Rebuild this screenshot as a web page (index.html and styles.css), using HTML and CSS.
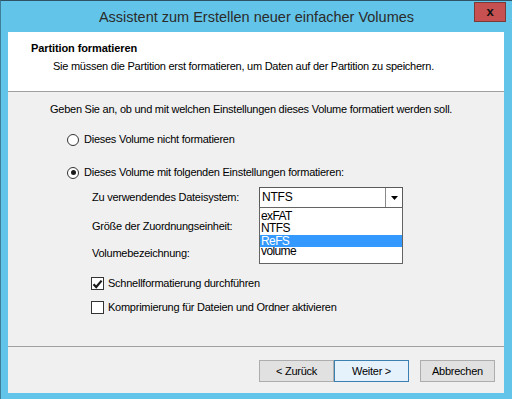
FILE: index.html
```html
<!DOCTYPE html>
<html lang="de">
<head>
<meta charset="utf-8">
<link rel="stylesheet" href="styles.css">
</head>
<body>
<div class="window">
  <div class="titlebar">
    <div class="title">Assistent zum Erstellen neuer einfacher Volumes</div>
    <div class="close">x</div>
  </div>
  <div class="client">
    <div class="header">
      <div class="h-title">Partition formatieren</div>
      <div class="h-sub">Sie müssen die Partition erst formatieren, um Daten auf der Partition zu speichern.</div>
    </div>
    <div class="body">
      <div class="intro">Geben Sie an, ob und mit welchen Einstellungen dieses Volume formatiert werden soll.</div>
      <div class="radio-row r1"><span class="radio"></span>Dieses Volume nicht formatieren</div>
      <div class="radio-row r2"><span class="radio on"></span>Dieses Volume mit folgenden Einstellungen formatieren:</div>
      <div class="settings">
        <div class="field f1">
          <span class="label">Zu verwendendes Dateisystem:</span>
          <div class="combo">
            <span class="combo-text">NTFS</span>
            <span class="combo-btn"><svg width="7" height="4" viewBox="0 0 7 4"><path d="M0 0H7L3.5 4Z" fill="#000"/></svg></span>
            <div class="dropdown">
              <div class="opt">exFAT</div>
              <div class="opt">NTFS</div>
              <div class="opt sel">ReFS</div>
              <div class="opt last">volume</div>
            </div>
          </div>
        </div>
        <div class="field f2"><span class="label">Größe der Zuordnungseinheit:</span></div>
        <div class="field f3"><span class="label">Volumebezeichnung:</span></div>
        <div class="check-row c1"><span class="check"><svg width="11" height="10" viewBox="0 0 11 10"><path d="M1.5 5.2L4.2 8L9.6 1.6" stroke="#1a1a1a" stroke-width="2.2" fill="none"/></svg></span>Schnellformatierung durchführen</div>
        <div class="check-row c2"><span class="check"></span>Komprimierung für Dateien und Ordner aktivieren</div>
      </div>
    </div>
    <div class="footer">
      <div class="btn-group">
        <div class="btn">&lt; Zurück</div>
        <div class="btn default">Weiter &gt;</div>
      </div>
      <div class="btn">Abbrechen</div>
    </div>
  </div>
</div>
</body>
</html>
```
FILE: styles.css
```css
html, body {
  margin: 0;
  padding: 0;
}
body {
  width: 512px;
  height: 399px;
  overflow: hidden;
  font-family: "Liberation Sans", Arial, sans-serif;
  font-size: 11px;
  letter-spacing: -0.25px;
  line-height: 13px;
  color: #000;
}
.window {
  box-sizing: border-box;
  width: 512px;
  height: 399px;
  background: #62c4e8;
  border-left: 1px solid #3f7f99;
  border-top: 1px solid #2f5364;
  display: flex;
  flex-direction: column;
}
.titlebar {
  height: 31px;
  position: relative;
  display: flex;
  align-items: center;
  justify-content: center;
}
.title {
  font-size: 14.5px;
  letter-spacing: 0;
  line-height: 18px;
  color: #2b2b2b;
  margin-top: 1px;
}
.close {
  position: absolute;
  right: 6px;
  top: 1px;
  width: 32px;
  height: 20px;
  box-sizing: border-box;
  background: #c75050;
  border: 1px solid #7c3a36;
  color: #111;
  font-weight: bold;
  font-size: 13px;
  letter-spacing: 0;
  display: flex;
  align-items: center;
  justify-content: center;
  line-height: 1;
  padding-bottom: 2px;
}
.client {
  margin: 0 8px 6px 7px;
  flex: 1;
  background: #f0f0f0;
  display: flex;
  flex-direction: column;
}
.header {
  background: #fff;
  height: 59px;
  border-bottom: 1px solid #a0a0a0;
  padding-left: 23px;
  overflow: hidden;
}
.h-title {
  font-weight: bold;
  letter-spacing: -0.1px;
  margin-top: 10px;
}
.h-sub {
  margin-top: 5px;
  padding-left: 22px;
}
.body {
  flex: 1;
  padding-left: 42px;
}
.intro {
  margin-top: 11px;
}
.radio-row {
  display: flex;
  align-items: center;
  padding-left: 17px;
}
.r1 { margin-top: 17px; }
.r2 { margin-top: 20px; }
.radio {
  width: 12px;
  height: 12px;
  border: 1px solid #333;
  border-radius: 50%;
  background: #fff;
  margin-right: 5px;
  box-sizing: border-box;
  position: relative;
}
.radio.on::after {
  content: "";
  position: absolute;
  left: 2.5px;
  top: 2.5px;
  width: 5px;
  height: 5px;
  border-radius: 50%;
  background: #1a1a1a;
}
.settings {
  padding-left: 42px;
}
.field {
  display: flex;
  align-items: center;
  height: 21px;
}
.f1 { margin-top: 8px; }
.f2 { margin-top: 8px; }
.f3 { margin-top: 6px; }
.label {
  width: 167px;
}
.combo {
  position: relative;
  width: 144px;
  height: 21px;
  box-sizing: border-box;
  border: 1px solid #5a5a5a;
  background: #fff;
  display: flex;
  align-items: center;
}
.combo-text {
  flex: 1;
  padding-left: 2px;
  font-size: 12px;
  letter-spacing: -0.2px;
}
.combo-btn {
  width: 16px;
  height: 19px;
  border-left: 1px solid #8a8a8a;
  display: flex;
  align-items: center;
  justify-content: center;
}
.dropdown {
  position: absolute;
  left: -1px;
  top: 19px;
  width: 144px;
  height: 57px;
  box-sizing: border-box;
  border: 1px solid #646464;
  background: #fff;
  overflow: hidden;
  padding-top: 2px;
}
.opt {
  height: 12px;
  line-height: 12px;
  padding-left: 1px;
  font-size: 12px;
  letter-spacing: -0.6px;
  color: #000;
}
.opt + .opt {
  height: 13px;
  line-height: 13px;
}
.opt.sel {
  position: relative;
  z-index: 1;
  background: #3399ff;
  color: #fff;
  height: 12px;
  line-height: 12px;
}
.opt.last {
  margin-top: -2px;
}
.check-row {
  display: flex;
  align-items: center;
  margin-left: -1px;
}
.c1 { margin-top: 13px; }
.c2 { margin-top: 11px; }
.check {
  width: 13px;
  height: 13px;
  box-sizing: border-box;
  border: 1px solid #333;
  background: #fff;
  margin-right: 4px;
  display: flex;
  align-items: center;
  justify-content: center;
}
.footer {
  height: 47px;
  border-top: 1px solid #a0a0a0;
  display: flex;
  align-items: flex-start;
  justify-content: flex-end;
  padding-right: 9px;
  padding-top: 13px;
  box-sizing: border-box;
  gap: 11px;
}
.btn-group {
  display: flex;
}
.btn {
  width: 75px;
  height: 22px;
  box-sizing: border-box;
  border: 1px solid #adadad;
  background: #e1e1e1;
  display: flex;
  align-items: center;
  justify-content: center;
}
.btn.default {
  border-color: #3c7fb1;
  background: #e5f1fb;
}
```
